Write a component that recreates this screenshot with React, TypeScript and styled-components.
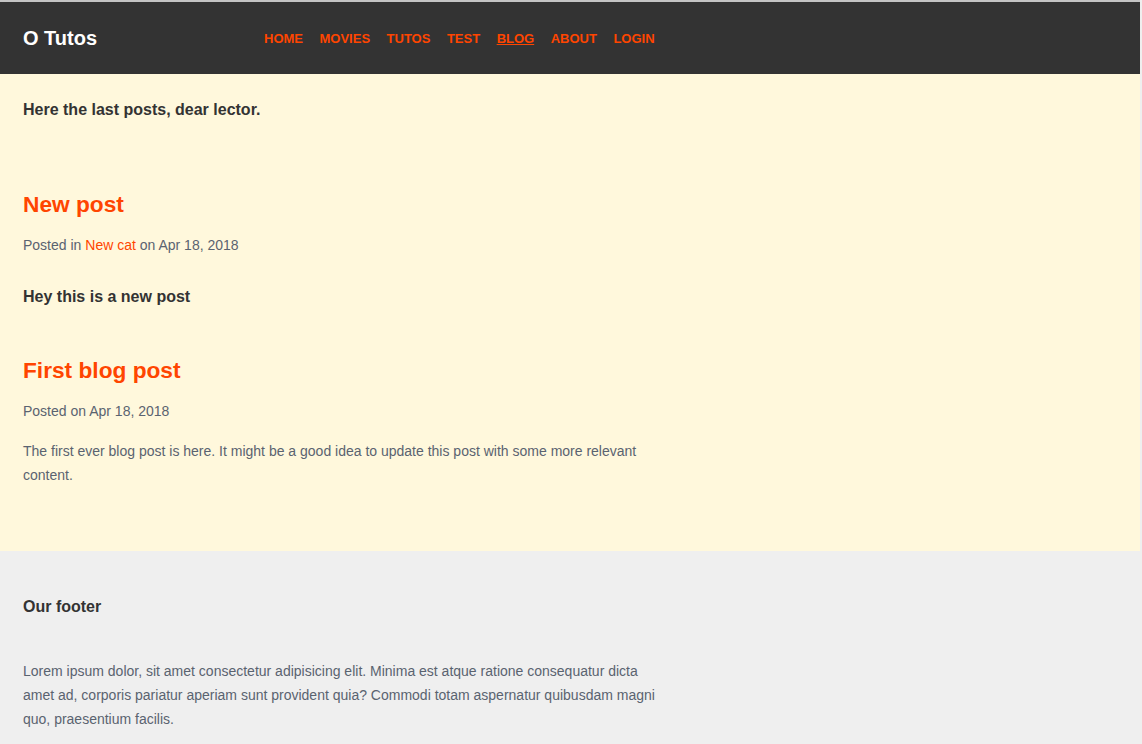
import React from "react";
import styled, { createGlobalStyle } from "styled-components";

const Global = createGlobalStyle`
  html, body { margin: 0; padding: 0; }
  body {
    background: #efefef;
    font-family: "Liberation Sans", Arial, sans-serif;
    color: #333333;
  }
`;

const Page = styled.div`
  border-top: 2px solid #c4c4c4;
  margin-right: 2px;
`;

const Header = styled.header`
  display: flex;
  align-items: center;
  height: 72px;
  padding: 0 23px;
  background: #333333;
`;

const Brand = styled.a`
  width: 241px;
  color: #ffffff;
  font-size: 20px;
  font-weight: 700;
  text-decoration: none;
`;

const Nav = styled.nav`
  display: flex;
  gap: 16.5px;
`;

const NavLink = styled.a<{ $active?: boolean }>`
  color: #ff4500;
  font-size: 13px;
  font-weight: 700;
  text-transform: uppercase;
  text-decoration: ${(p) => (p.$active ? "underline" : "none")};
`;

const Main = styled.main`
  background: #fff8dc;
  padding: 26px 23px 64px;
`;

const Column = styled.div`
  max-width: 640px;
  display: flex;
  flex-direction: column;
`;

const Lead = styled.p`
  margin: 0;
  font-size: 16px;
  line-height: 20px;
  font-weight: 700;
  color: #333333;
`;

const Post = styled.article<{ $gap: number }>`
  margin-top: ${(p) => p.$gap}px;
  display: flex;
  flex-direction: column;
`;

const PostTitle = styled.h2`
  margin: 0;
  font-size: 22.7px;
  line-height: 28px;
  font-weight: 700;
  color: #ff4500;
`;

const Meta = styled.p`
  margin: 17px 0 0;
  font-size: 14px;
  line-height: 20px;
  color: #5a6370;
`;

const MetaLink = styled.a`
  color: #ff4500;
  text-decoration: none;
`;

const StrongBody = styled.p`
  margin: 32px 0 0;
  font-size: 16px;
  line-height: 20px;
  font-weight: 700;
  color: #333333;
`;

const Body = styled.p<{ $gap: number }>`
  margin: ${(p) => p.$gap}px 0 0;
  font-size: 14px;
  line-height: 24px;
  color: #5a6370;
`;

const Footer = styled.footer`
  background: #efefef;
  padding: 46px 23px 40px;
`;

const FooterTitle = styled.h4`
  margin: 0;
  font-size: 16px;
  line-height: 20px;
  font-weight: 700;
  color: #333333;
`;

const navItems = ["Home", "Movies", "Tutos", "Test", "Blog", "About", "Login"];

export default function App() {
  return (
    <>
      <Global />
      <Page>
        <Header>
          <Brand href="#">O Tutos</Brand>
          <Nav>
            {navItems.map((n) => (
              <NavLink key={n} href="#" $active={n === "Blog"}>
                {n}
              </NavLink>
            ))}
          </Nav>
        </Header>
        <Main>
          <Column>
            <Lead>Here the last posts, dear lector.</Lead>
            <Post $gap={70}>
              <PostTitle>New post</PostTitle>
              <Meta>
                Posted in <MetaLink href="#">New cat</MetaLink> on Apr 18, 2018
              </Meta>
              <StrongBody>Hey this is a new post</StrongBody>
            </Post>
            <Post $gap={49}>
              <PostTitle>First blog post</PostTitle>
              <Meta>Posted on Apr 18, 2018</Meta>
              <Body $gap={18}>
                The first ever blog post is here. It might be a good idea to update this post with some more relevant content.
              </Body>
            </Post>
          </Column>
        </Main>
        <Footer>
          <Column>
            <FooterTitle>Our footer</FooterTitle>
            <Body $gap={42}>
              Lorem ipsum dolor, sit amet consectetur adipisicing elit. Minima est atque ratione consequatur dicta amet ad, corporis pariatur aperiam sunt provident quia? Commodi totam aspernatur quibusdam magni quo, praesentium facilis.
            </Body>
          </Column>
        </Footer>
      </Page>
    </>
  );
}
